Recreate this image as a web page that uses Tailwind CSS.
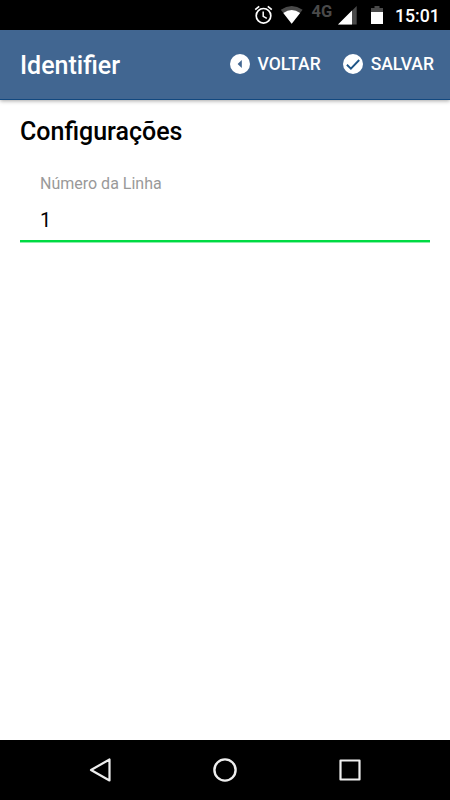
<!DOCTYPE html>
<html lang="pt-BR">
<head>
    <meta charset="UTF-8">
    <meta name="viewport" content="width=device-width, initial-scale=1.0">
    <title>Identifier</title>
    <script src="https://cdn.jsdelivr.net/npm/@tailwindcss/browser@4"></script>
</head>
<body class="h-screen flex flex-col overflow-hidden bg-white font-[Roboto,sans-serif] text-black">
    <!-- Status bar -->
    <div class="h-[30px] shrink-0 bg-black text-white flex items-center pl-[250px]">
        <svg class="w-[145px] h-[30px] shrink-0" viewBox="250 0 145 30" fill="none">
            <circle cx="263.5" cy="15.8" r="7.3" stroke="#fff" stroke-width="1.7"/>
            <path d="M255.2 9.7l4-3.3M271.8 9.7l-4-3.3" stroke="#fff" stroke-width="1.7"/>
            <path d="M263.2 11.5v4.8l3.6 2.1" stroke="#fff" stroke-width="1.5"/>
            <path d="M280.8 9.8Q291.7 2.4 302.6 9.8L291.7 23.7z" fill="#4a4a4a"/>
            <path d="M283.3 12.9Q291.7 7.3 300.1 12.9L291.7 23.7z" fill="#fff"/>
            <text x="311.5" y="16.5" font-size="16.5" font-weight="700" fill="#4a4a4a">4G</text>
            <path d="M338 24.5L356.7 6v18.5z" fill="#4a4a4a"/>
            <path d="M338 24.5L352 10.5v14z" fill="#fff"/>
            <path d="M371 12V8h3.5V6h5v2h3.5v4z" fill="#4a4a4a"/>
            <path d="M371 12h12v12h-12z" fill="#fff"/>
        </svg>
        <span class="text-[17.7px] leading-[30px] font-medium pt-[2px]">15:01</span>
    </div>

    <!-- Toolbar -->
    <header class="relative h-[70px] shrink-0 bg-[#416691] border-b border-[#12487f] shadow-[0_1px_4px_rgba(0,0,0,0.35)] text-white flex items-center justify-between pl-5 pr-4">
        <h1 class="text-[25px] font-medium leading-[30px] pt-[3px]">Identifier</h1>
        <div class="flex items-center gap-[22px] text-[17.5px] font-medium leading-6 -mt-px">
            <button class="flex items-center gap-2">
                <svg class="w-5 h-5" viewBox="0 0 20 20">
                    <circle cx="10" cy="10" r="10" fill="#fff"/>
                    <path d="M11.8 6v8L7.6 10z" fill="#416691"/>
                </svg>
                VOLTAR
            </button>
            <button class="flex items-center gap-2">
                <svg class="w-5 h-5" viewBox="0 0 20 20" fill="none">
                    <circle cx="10" cy="10" r="10" fill="#fff"/>
                    <path d="M3.9 10.8l4 3.8L16.2 6" stroke="#1f5587" stroke-width="1.9"/>
                </svg>
                SALVAR
            </button>
        </div>
    </header>

    <!-- Content -->
    <main class="flex-1 px-5 pt-[17px]">
        <h2 class="text-[25px] font-medium leading-[30px]">Configurações</h2>
        <div class="mt-[27px] h-[66px] px-5">
            <label class="block text-[16px] leading-5 text-[#999]">Número da Linha</label>
            <div class="mt-[14px] text-[20px] leading-6">1</div>
        </div>
        <div class="h-[3px] bg-[#00db43] border-b border-[#8deeab]"></div>
    </main>

    <!-- Navigation bar -->
    <nav class="h-[60px] shrink-0 bg-black flex items-center justify-center gap-[101px]">
        <svg class="w-6 h-6" viewBox="0 0 24 24" fill="none" stroke="#eee" stroke-width="2.2" stroke-linejoin="round">
            <path d="M21.5 1.5v21L3 12z"/>
        </svg>
        <svg class="w-6 h-6" viewBox="0 0 24 24" fill="none" stroke="#eee" stroke-width="2.4">
            <circle cx="12" cy="12" r="10.6"/>
        </svg>
        <svg class="w-6 h-6" viewBox="0 0 24 24" fill="none" stroke="#eee" stroke-width="2.2" stroke-linejoin="round">
            <path d="M2.5 2.5h19v19h-19z"/>
        </svg>
    </nav>
</body>
</html>
